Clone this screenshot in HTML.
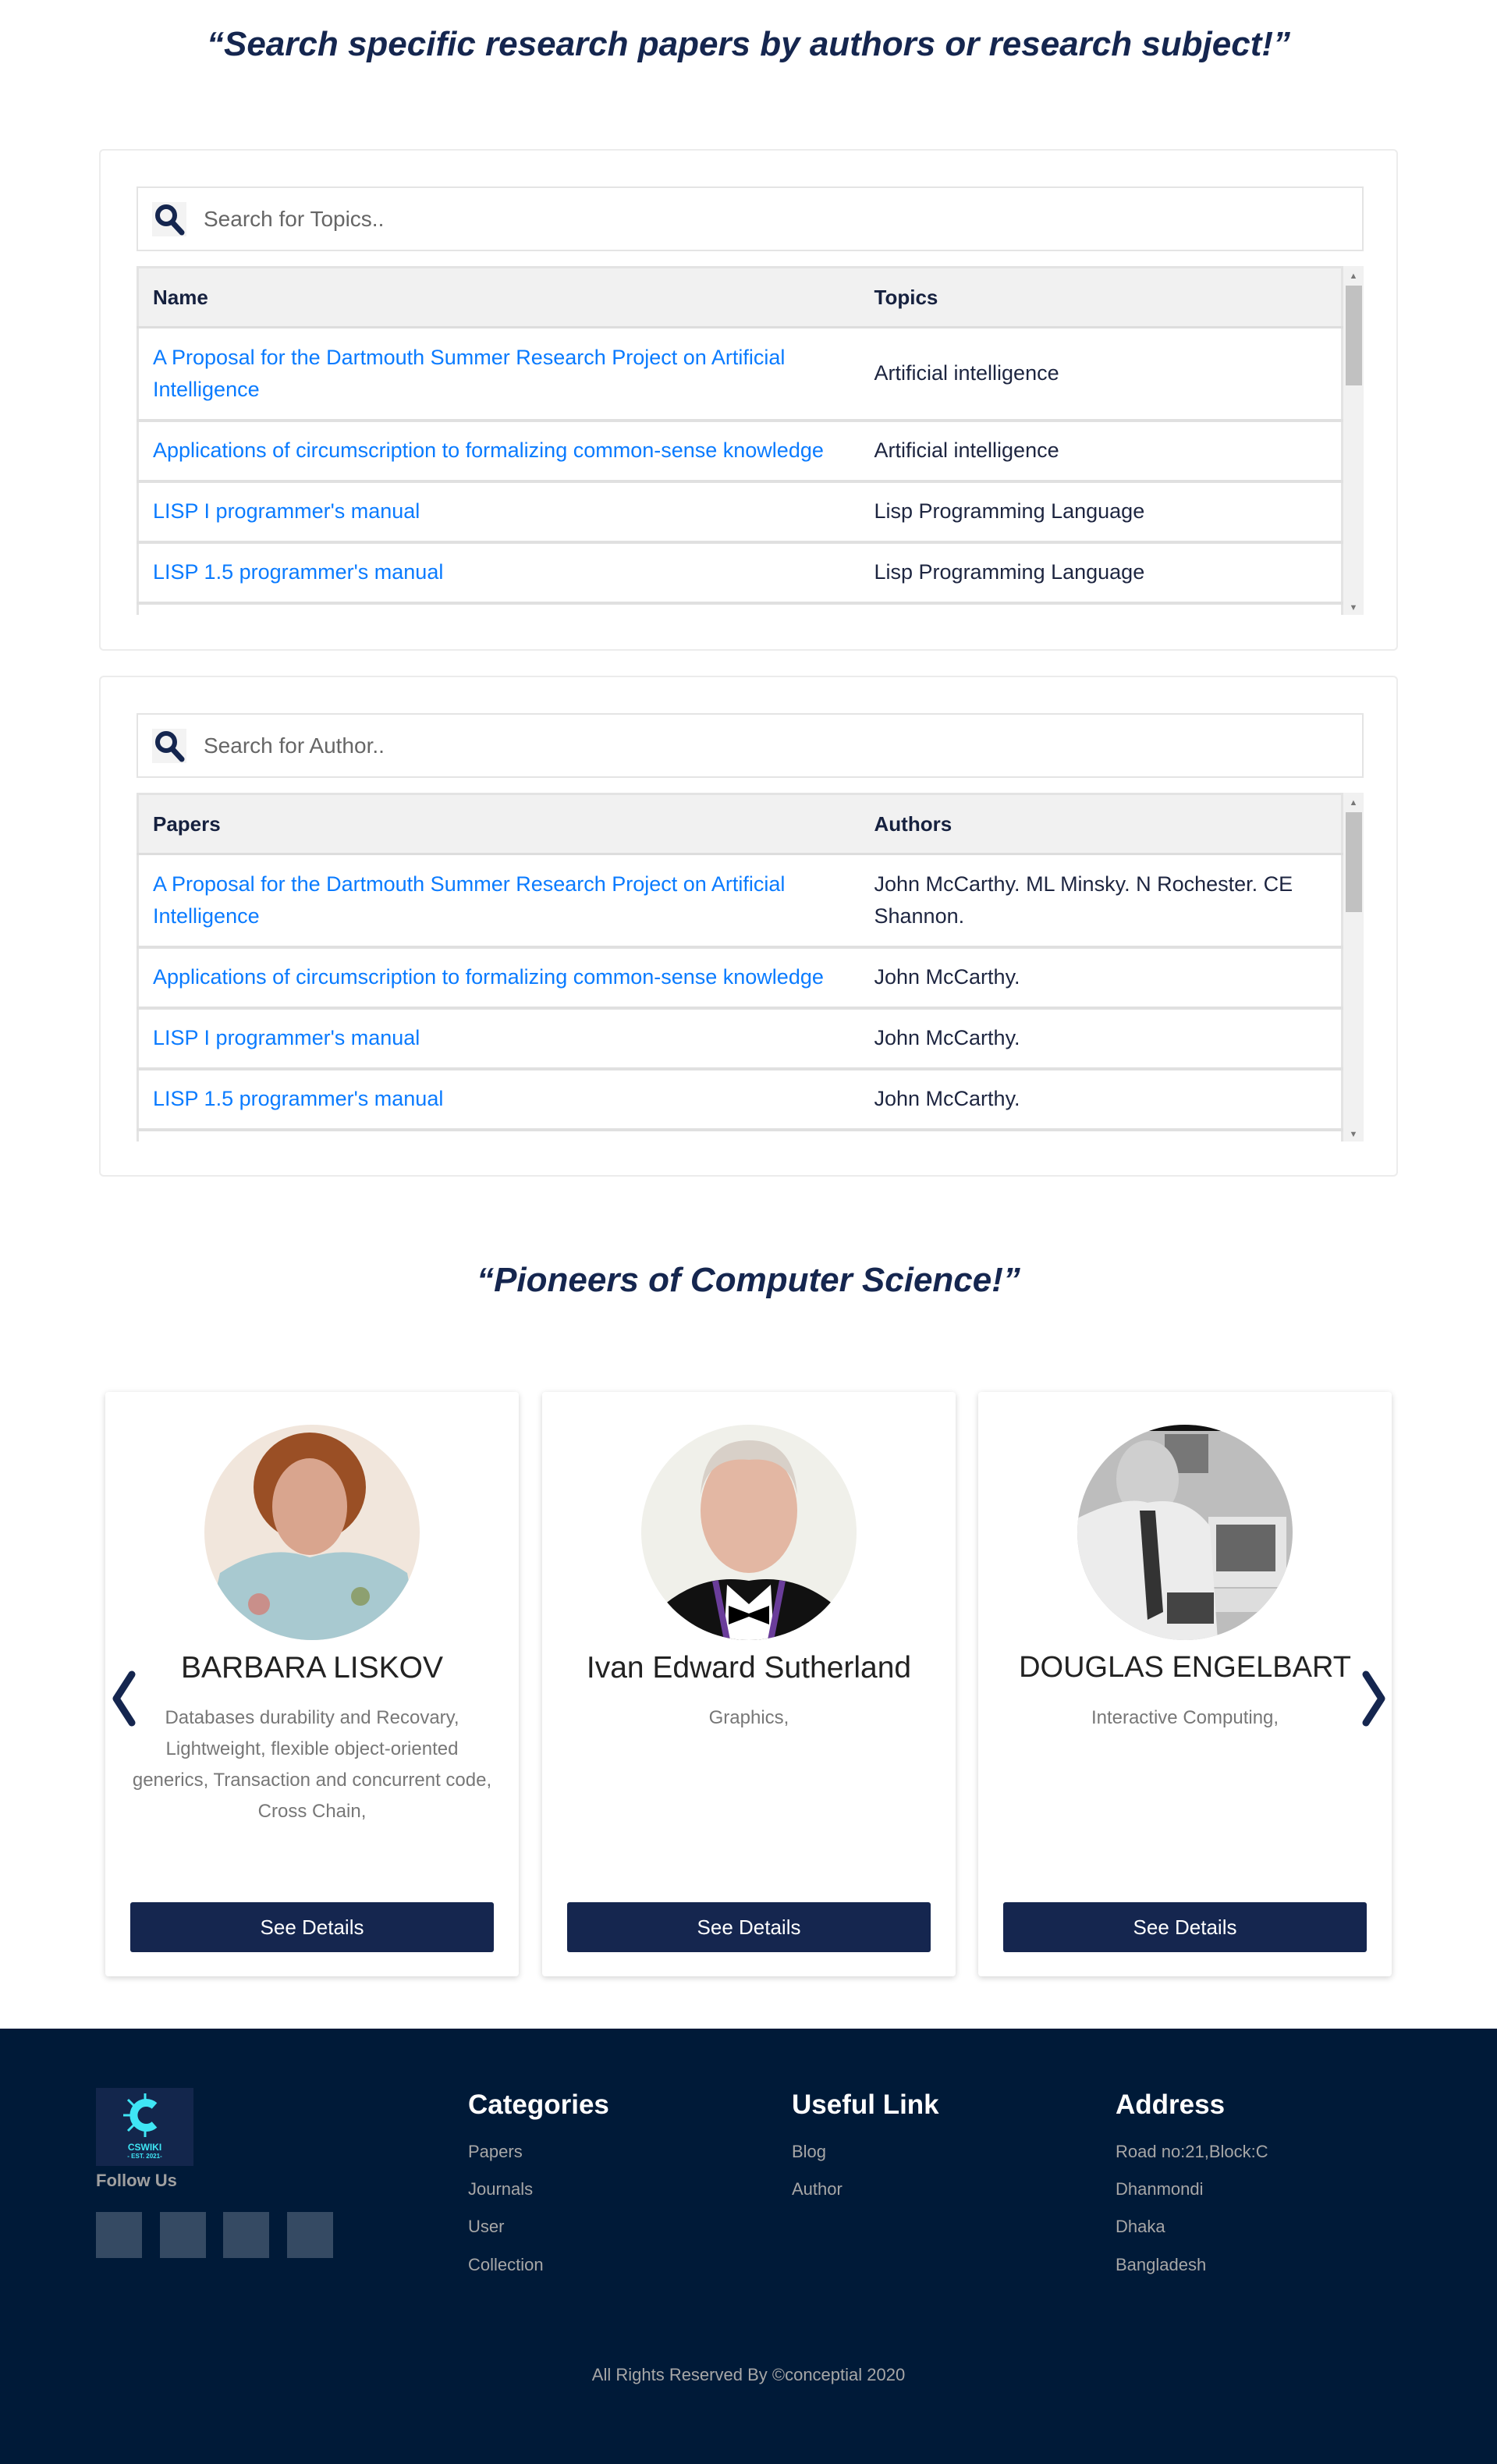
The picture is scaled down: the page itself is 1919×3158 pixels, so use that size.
<!DOCTYPE html>
<html><head><meta charset="utf-8">
<style>
*{box-sizing:border-box;margin:0;padding:0}
body{width:1919px;height:3158px;background:#fff;font-family:"Liberation Sans",sans-serif;color:#1d2540;position:relative;overflow:hidden}
.abs{position:absolute}
h2{position:absolute;left:0;width:1919px;text-align:center;font-style:italic;font-weight:bold;color:#15264f;font-size:44px}
.box{position:absolute;left:127px;width:1665px;border:2px solid #ececec;border-radius:6px}
.search{position:absolute;left:46px;width:1573px;height:83px;border:2px solid #e4e4e4;display:flex;align-items:center;font-size:28px;color:#666}
.search .ic{width:44px;height:44px;background:#f3f3f3;margin:0 22px 0 18px;position:relative}
.tbl{position:absolute;left:46px;width:1573px;height:447px;overflow:hidden}
table{border-collapse:collapse;width:1547px;border:3px solid #e3e3e3;border-bottom:none}
th{background:#f1f1f1;text-align:left;font-size:26px;font-weight:bold;height:77px;padding:0 18px;border-bottom:3px solid #ddd;color:#16213f}
td{font-size:27px;line-height:41px;padding:0 18px;border-bottom:4px solid #e0e0e0;vertical-align:middle;color:#1d2540}
td a{color:#0a7bff;text-decoration:none}
.sb{position:absolute;right:0;top:0;width:26px;height:100%;background:#f1f1f1}
.sb .th{position:absolute;left:3px;top:25px;width:21px;height:128px;background:#c1c1c1}
.sb .u,.sb .d{position:absolute;left:0;width:26px;text-align:center;font-size:11px;color:#777;line-height:14px}
.card{position:absolute;top:1784px;width:530px;height:749px;background:#fff;box-shadow:0 2px 8px rgba(0,0,0,.18);border-radius:4px;text-align:center}
.card .name{position:absolute;top:332px;left:0;width:100%;font-size:39px;color:#222}
.card .desc{position:absolute;top:398px;left:28px;right:28px;font-size:24px;line-height:40px;color:#777}
.card .btn{position:absolute;left:32px;right:32px;top:654px;height:64px;background:#15264f;color:#fff;font-size:26px;line-height:64px;border-radius:3px}
.card svg{position:absolute;left:127px;top:42px}
footer{position:absolute;top:2600px;left:0;width:1919px;height:558px;background:#001a38}
footer h3{position:absolute;top:78px;font-size:35px;color:#fff;font-weight:bold}
footer .l{position:absolute;font-size:22px;color:#a7a7a7}
.sq{position:absolute;top:235px;width:59px;height:59px;background:#354a63}
</style></head><body>
<h2 style="top:32px">“Search specific research papers by authors or research subject!”</h2>

<div class="box" style="top:191px;height:643px">
 <div class="search" style="top:46px"><div class="ic"><svg width="44" height="44" viewBox="0 0 44 44"><circle cx="18" cy="17" r="11" fill="none" stroke="#15264f" stroke-width="6"/><line x1="26" y1="26" x2="38" y2="39" stroke="#15264f" stroke-width="7" stroke-linecap="round"/></svg></div>Search for Topics..</div>
 <div class="tbl" style="top:148px">
  <table><tr><th style="width:926px">Name</th><th>Topics</th></tr>
  <tr style="height:119px"><td><a>A Proposal for the Dartmouth Summer Research Project on Artificial Intelligence</a></td><td>Artificial intelligence</td></tr>
  <tr style="height:78px"><td><a>Applications of circumscription to formalizing common-sense knowledge</a></td><td>Artificial intelligence</td></tr>
  <tr style="height:78px"><td><a>LISP I programmer's manual</a></td><td>Lisp Programming Language</td></tr>
  <tr style="height:78px"><td><a>LISP 1.5 programmer's manual</a></td><td>Lisp Programming Language</td></tr>
  <tr style="height:78px"><td><a>Recursive functions of symbolic expressions</a></td><td>Lisp Programming Language</td></tr>
  </table>
  <div class="sb"><div class="u" style="top:6px">▲</div><div class="th"></div><div class="d" style="bottom:2px">▼</div></div>
 </div>
</div>

<div class="box" style="top:866px;height:642px">
 <div class="search" style="top:46px"><div class="ic"><svg width="44" height="44" viewBox="0 0 44 44"><circle cx="18" cy="17" r="11" fill="none" stroke="#15264f" stroke-width="6"/><line x1="26" y1="26" x2="38" y2="39" stroke="#15264f" stroke-width="7" stroke-linecap="round"/></svg></div>Search for Author..</div>
 <div class="tbl" style="top:148px">
  <table><tr><th style="width:926px">Papers</th><th>Authors</th></tr>
  <tr style="height:119px"><td><a>A Proposal for the Dartmouth Summer Research Project on Artificial Intelligence</a></td><td>John McCarthy. ML Minsky. N Rochester. CE Shannon.</td></tr>
  <tr style="height:78px"><td><a>Applications of circumscription to formalizing common-sense knowledge</a></td><td>John McCarthy.</td></tr>
  <tr style="height:78px"><td><a>LISP I programmer's manual</a></td><td>John McCarthy.</td></tr>
  <tr style="height:78px"><td><a>LISP 1.5 programmer's manual</a></td><td>John McCarthy.</td></tr>
  <tr style="height:78px"><td><a>Recursive functions</a></td><td>John McCarthy.</td></tr>
  </table>
  <div class="sb"><div class="u" style="top:6px">▲</div><div class="th"></div><div class="d" style="bottom:2px">▼</div></div>
 </div>
</div>

<h2 style="top:1616px">“Pioneers of Computer Science!”</h2>

<div class="card" style="left:135px">
 <svg width="276" height="276" viewBox="0 0 276 276"><defs><clipPath id="c1"><circle cx="138" cy="138" r="138"/></clipPath></defs><g clip-path="url(#c1)"><rect width="276" height="276" fill="#f1e6dc"/><ellipse cx="135" cy="80" rx="72" ry="70" fill="#9a4f25"/><ellipse cx="135" cy="105" rx="48" ry="62" fill="#d9a58e"/><path d="M0 276 L20 190 Q80 150 135 170 Q200 150 260 190 L276 276Z" fill="#a8c9d0"/><circle cx="70" cy="230" r="14" fill="#c98f8a"/><circle cx="200" cy="220" r="12" fill="#8da070"/></g></svg>
 <div class="name">BARBARA LISKOV</div>
 <div class="desc">Databases durability and Recovary,<br>Lightweight, flexible object-oriented<br>generics, Transaction and concurrent code,<br>Cross Chain,</div>
 <div class="btn">See Details</div>
</div>
<div class="card" style="left:695px">
 <svg width="276" height="276" viewBox="0 0 276 276"><defs><clipPath id="c2"><circle cx="138" cy="138" r="138"/></clipPath></defs><g clip-path="url(#c2)"><rect width="276" height="276" fill="#f0f0ea"/><ellipse cx="138" cy="110" rx="62" ry="80" fill="#e3b7a3"/><path d="M76 90 Q80 20 138 20 Q196 20 200 90 Q190 40 138 45 Q86 40 76 90Z" fill="#d8d0c8"/><path d="M10 276 L30 230 Q80 190 138 200 Q196 190 246 230 L266 276Z" fill="#111"/><path d="M110 205 L138 230 L166 205 L170 276 L106 276Z" fill="#fff"/><path d="M95 200 L110 276 M181 200 L166 276" stroke="#6a3d9a" stroke-width="8"/><path d="M112 232 L138 242 L164 232 L164 256 L138 246 L112 256Z" fill="#000"/></g></svg>
 <div class="name">Ivan Edward Sutherland</div>
 <div class="desc">Graphics,</div>
 <div class="btn">See Details</div>
</div>
<div class="card" style="left:1254px">
 <svg width="276" height="276" viewBox="0 0 276 276"><defs><clipPath id="c3"><circle cx="138" cy="138" r="138"/></clipPath></defs><g clip-path="url(#c3)"><rect width="276" height="276" fill="#bdbdbd"/><rect width="276" height="8" fill="#111"/><rect x="112" y="12" width="56" height="50" fill="#777"/><rect x="168" y="118" width="100" height="90" fill="#e5e5e5"/><rect x="178" y="128" width="76" height="60" fill="#666"/><rect x="170" y="210" width="100" height="30" fill="#ddd"/><ellipse cx="90" cy="70" rx="40" ry="50" fill="#cfcfcf"/><path d="M0 276 L0 120 Q60 90 90 100 Q140 90 170 130 L180 276Z" fill="#ececec"/><path d="M80 110 L100 110 L110 240 L90 250Z" fill="#333"/><rect x="115" y="215" width="60" height="40" fill="#444"/></g></svg>
 <div class="name" style="font-size:38px">DOUGLAS ENGELBART</div>
 <div class="desc">Interactive Computing,</div>
 <div class="btn">See Details</div>
</div>
<svg class="abs" style="left:141px;top:2140px" width="34" height="74" viewBox="0 0 34 74"><path d="M28 6 L8 37 L28 68" fill="none" stroke="#15264f" stroke-width="9" stroke-linecap="round" stroke-linejoin="round"/></svg>
<svg class="abs" style="left:1745px;top:2140px" width="34" height="74" viewBox="0 0 34 74"><path d="M6 6 L26 37 L6 68" fill="none" stroke="#15264f" stroke-width="9" stroke-linecap="round" stroke-linejoin="round"/></svg>

<footer>
 <div class="abs" style="left:123px;top:76px;width:125px;height:100px;background:#13264c;text-align:center">
  <svg width="60" height="60" viewBox="0 0 60 60" style="margin-top:5px"><path d="M42 18 A16 16 0 1 0 42 42" fill="none" stroke="#3fe6f5" stroke-width="10"/><g stroke="#3fe6f5" stroke-width="3"><line x1="30" y1="12" x2="30" y2="2"/><line x1="16" y1="18" x2="8" y2="10"/><line x1="12" y1="30" x2="2" y2="30"/><line x1="16" y1="42" x2="8" y2="50"/><line x1="30" y1="48" x2="30" y2="58"/></g></svg>
  <div style="color:#3fe6f5;font-size:12px;font-weight:bold;line-height:13px">CSWIKI</div>
  <div style="color:#3fe6f5;font-size:8px;font-weight:bold">- EST. 2021-</div>
 </div>
 <div class="abs" style="left:123px;top:182px;font-size:22px;font-weight:bold;color:#a0a0a0">Follow Us</div>
 <div class="sq" style="left:123px"></div><div class="sq" style="left:205px"></div><div class="sq" style="left:286px"></div><div class="sq" style="left:368px"></div>
 <h3 style="left:600px">Categories</h3><h3 style="left:1015px">Useful Link</h3><h3 style="left:1430px">Address</h3>
 <div class="l" style="left:600px;top:145px">Papers</div><div class="l" style="left:600px;top:193px">Journals</div><div class="l" style="left:600px;top:241px">User</div><div class="l" style="left:600px;top:290px">Collection</div>
 <div class="l" style="left:1015px;top:145px">Blog</div><div class="l" style="left:1015px;top:193px">Author</div>
 <div class="l" style="left:1430px;top:145px">Road no:21,Block:C</div><div class="l" style="left:1430px;top:193px">Dhanmondi</div><div class="l" style="left:1430px;top:241px">Dhaka</div><div class="l" style="left:1430px;top:290px">Bangladesh</div>
 <div class="l" style="left:0;width:1919px;text-align:center;top:431px">All Rights Reserved By ©conceptial 2020</div>
</footer>
</body></html>
